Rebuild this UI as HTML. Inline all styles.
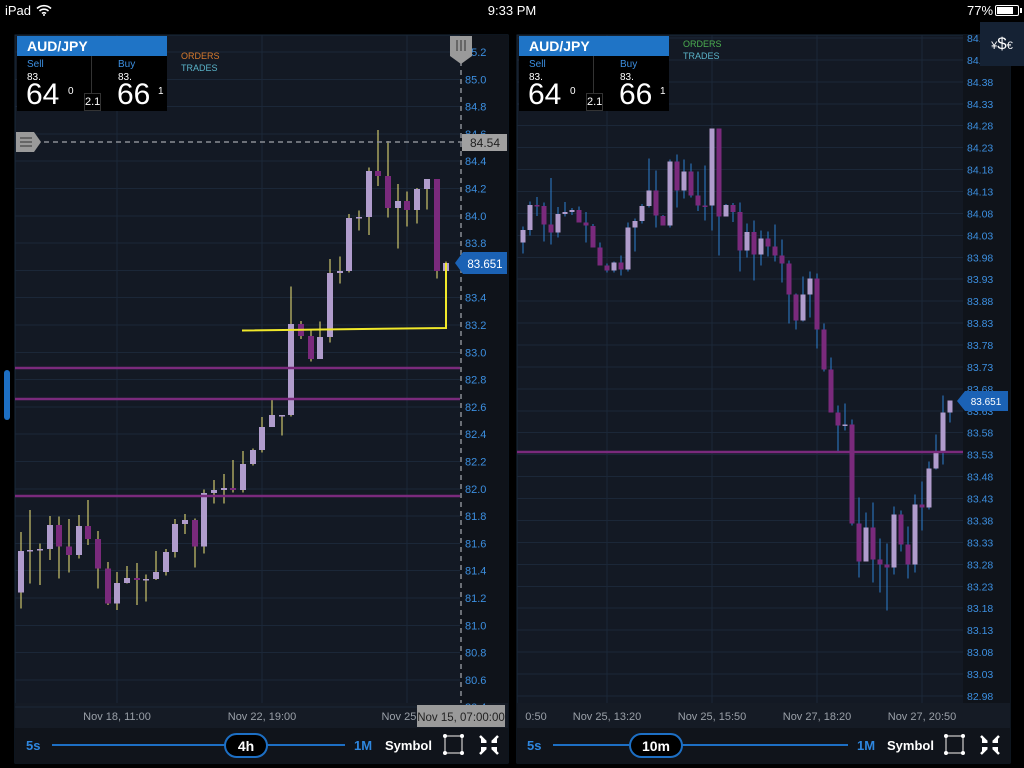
<!DOCTYPE html>
<html><head><meta charset="utf-8"><style>
*{margin:0;padding:0;box-sizing:border-box}
body{width:1024px;height:768px;background:#000;overflow:hidden;font-family:"Liberation Sans",sans-serif;position:relative;color:#fff}
.a{position:absolute}
</style></head><body>
<div class="a" style="left:5px;top:3px;font-size:13px">iPad</div>
<svg class="a" style="left:36px;top:4px" width="16" height="12" viewBox="0 0 16 12"><path d="M1 4.5a10 10 0 0 1 14 0M3.5 7a6.5 6.5 0 0 1 9 0M6 9.5a3 3 0 0 1 4 0" stroke="#fff" stroke-width="1.6" fill="none"/><circle cx="8" cy="11" r="1" fill="#fff"/></svg>
<div class="a" style="left:0;width:1024px;top:3px;text-align:center;font-size:13px">9:33 PM</div>
<div class="a" style="left:967px;top:3px;font-size:13px">77%</div>
<div class="a" style="left:995px;top:5px;width:24px;height:11px;border:1px solid #fff;border-radius:2px"><div style="margin:1px;width:16px;height:7px;background:#fff"></div></div>
<div class="a" style="left:1020px;top:8px;width:2px;height:5px;background:#fff"></div>
<div class="a" style="left:4px;top:370px;width:6px;height:50px;background:#1d6fc4;border-radius:3px"></div>

<svg class="a" style="left:0;top:0" width="1024" height="768" id="s">
<rect x="15" y="35" width="493" height="728" fill="#131924" stroke="#1a2a3d"/>
<rect x="460" y="35" width="48" height="668" fill="#0f131a"/>
<rect x="15" y="703" width="493" height="25" fill="#151b25"/>
<rect x="15" y="728" width="493" height="35" fill="#10141b"/>
<rect x="517" y="35" width="493" height="728" fill="#131924" stroke="#1a2a3d"/>
<rect x="963" y="35" width="47" height="668" fill="#0f131a"/>
<rect x="517" y="703" width="493" height="25" fill="#151b25"/>
<rect x="517" y="728" width="493" height="35" fill="#10141b"/>
<g id="grid" stroke="#1b2738" stroke-width="1" shape-rendering="crispEdges"></g>
<g id="lc" transform="translate(15,120) scale(0.33333)" shape-rendering="crispEdges"></g>
<g id="rc" transform="translate(515,120) scale(0.33333)" shape-rendering="crispEdges"></g>
<g stroke="#7a2a7c" stroke-width="2.5"><line x1="15" y1="368" x2="460" y2="368"/><line x1="15" y1="399" x2="460" y2="399"/><line x1="15" y1="496" x2="460" y2="496"/><line x1="517" y1="452" x2="963" y2="452"/></g>
<polyline points="242,330.5 446,328 446,263" fill="none" stroke="#f0e82a" stroke-width="2"/>
<g id="ax" font-family="Liberation Sans" font-size="11" fill="#3c8fe0"></g>
<line x1="35" y1="142" x2="462" y2="142" stroke="#8a8e94" stroke-width="1.5" stroke-dasharray="5,4"/>
<line x1="461" y1="52" x2="461" y2="703" stroke="#8a8e94" stroke-width="1.5" stroke-dasharray="5,4"/>
<path d="M16 132h18l7 10-7 10h-18z" fill="#9a9a9a"/>
<g stroke="#555" stroke-width="1.5"><line x1="20" y1="138" x2="32" y2="138"/><line x1="20" y1="142" x2="32" y2="142"/><line x1="20" y1="146" x2="32" y2="146"/></g>
<path d="M450 36h22v20l-11 8-11-8z" fill="#9a9a9a"/>
<g stroke="#555" stroke-width="1.5"><line x1="457" y1="40" x2="457" y2="51"/><line x1="461" y1="40" x2="461" y2="51"/><line x1="465" y1="40" x2="465" y2="51"/></g>
<rect x="462" y="134" width="45" height="17" fill="#a0a0a0"/>
<text x="485" y="147" fill="#222" font-size="12" text-anchor="middle" font-family="Liberation Sans">84.54</text>
<path d="M463 252h44v22h-44l-8-11z" fill="#1b62b5"/>
<text x="485" y="268" fill="#fff" font-size="11.5" text-anchor="middle" font-family="Liberation Sans">83.651</text>
<path d="M965 391h43v20h-43l-8-10z" fill="#1b62b5"/>
<text x="986" y="405" fill="#fff" font-size="10" text-anchor="middle" font-family="Liberation Sans">83.651</text>
<g font-family="Liberation Sans" font-size="11" fill="#9aa0a8" text-anchor="middle">
<text x="117" y="720">Nov 18, 11:00</text><text x="262" y="720">Nov 22, 19:00</text><text x="405" y="720">Nov 25, 0</text>
<text x="536" y="720">0:50</text><text x="607" y="720">Nov 25, 13:20</text><text x="712" y="720">Nov 25, 15:50</text><text x="817" y="720">Nov 27, 18:20</text><text x="922" y="720">Nov 27, 20:50</text>
</g>
<rect x="417" y="705" width="88" height="22" fill="#9a9a9a"/>
<text x="461" y="721" fill="#222" font-size="11.5" text-anchor="middle" font-family="Liberation Sans">Nov 15, 07:00:00</text>
<g font-family="Liberation Sans" font-weight="bold" font-size="13">
<text x="26" y="750" fill="#2e86de">5s</text>
<line x1="52" y1="745" x2="345" y2="745" stroke="#1d6fc4" stroke-width="2"/>
<rect x="225" y="734" width="42" height="23" rx="11.5" fill="#000" stroke="#1d6fc4" stroke-width="2"/>
<text x="246" y="751" fill="#fff" text-anchor="middle" font-size="14">4h</text>
<text x="354" y="750" fill="#2e86de">1M</text>
<text x="385" y="750" fill="#fff">Symbol</text>
<text x="527" y="750" fill="#2e86de">5s</text>
<line x1="553" y1="745" x2="848" y2="745" stroke="#1d6fc4" stroke-width="2"/>
<rect x="630" y="734" width="52" height="23" rx="11.5" fill="#000" stroke="#1d6fc4" stroke-width="2"/>
<text x="656" y="751" fill="#fff" text-anchor="middle" font-size="14">10m</text>
<text x="857" y="750" fill="#2e86de">1M</text>
<text x="887" y="750" fill="#fff">Symbol</text>
</g>
<g id="ic"></g>
</svg>

<div class="a" style="left:17px;top:36px;width:150px;height:75px;background:#000">
<div style="height:20px;background:#1f74c6;font-weight:bold;font-size:14px;padding:2px 0 0 10px">AUD/JPY</div>
<div class="a" style="left:74px;top:20px;width:1px;height:55px;background:#333"></div>
<div class="a" style="left:67px;top:57px;width:17px;height:18px;border:1px solid #333;background:#000;font-size:11px;padding:2px 0 0 0">2.1</div>
<div class="a" style="left:10px;top:23px;font-size:10px;color:#3c8fe0">Sell</div>
<div class="a" style="left:10px;top:36px;font-size:10px">83.</div>
<div class="a" style="left:9px;top:42px;font-size:30px">64</div><div class="a" style="left:51px;top:50px;font-size:10px">0</div>
<div class="a" style="left:101px;top:23px;font-size:10px;color:#3c8fe0">Buy</div>
<div class="a" style="left:101px;top:36px;font-size:10px">83.</div>
<div class="a" style="left:100px;top:42px;font-size:30px">66</div><div class="a" style="left:141px;top:50px;font-size:10px">1</div>
</div>
<div class="a" style="left:181px;top:51px;font-size:9px;color:#d97a2c">ORDERS</div>
<div class="a" style="left:181px;top:63px;font-size:9px;color:#5ab3c8">TRADES</div>
<div class="a" style="left:519px;top:36px;width:150px;height:75px;background:#000">
<div style="height:20px;background:#1f74c6;font-weight:bold;font-size:14px;padding:2px 0 0 10px">AUD/JPY</div>
<div class="a" style="left:74px;top:20px;width:1px;height:55px;background:#333"></div>
<div class="a" style="left:67px;top:57px;width:17px;height:18px;border:1px solid #333;background:#000;font-size:11px;padding:2px 0 0 0">2.1</div>
<div class="a" style="left:10px;top:23px;font-size:10px;color:#3c8fe0">Sell</div>
<div class="a" style="left:10px;top:36px;font-size:10px">83.</div>
<div class="a" style="left:9px;top:42px;font-size:30px">64</div><div class="a" style="left:51px;top:50px;font-size:10px">0</div>
<div class="a" style="left:101px;top:23px;font-size:10px;color:#3c8fe0">Buy</div>
<div class="a" style="left:101px;top:36px;font-size:10px">83.</div>
<div class="a" style="left:100px;top:42px;font-size:30px">66</div><div class="a" style="left:141px;top:50px;font-size:10px">1</div>
</div>
<div class="a" style="left:683px;top:39px;font-size:9px;color:#4caf50">ORDERS</div>
<div class="a" style="left:683px;top:51px;font-size:9px;color:#5ab3c8">TRADES</div>
<div class="a" style="left:980px;top:22px;width:44px;height:44px;background:#152234;font-size:11px;text-align:center;padding-top:12px">¥<span style="font-size:17px">$</span>€</div>

<script>
var NS="http://www.w3.org/2000/svg";
function el(p,t,a){var e=document.createElementNS(NS,t);for(var k in a)e.setAttribute(k,a[k]);p.appendChild(e);return e}
var L=[[18,1293,1418,1236,1466,1],[45,1290,1293,1170,1390,1],[75,1287,1290,1270,1395,1],[105,1215,1287,1188,1320,1],[132,1215,1280,1190,1376,0],[162,1280,1305,1197,1358,0],[192,1218,1305,1185,1316,1],[219,1218,1257,1140,1275,0],[249,1257,1346,1233,1406,0],[279,1346,1451,1326,1455,0],[306,1389,1451,1356,1470,1],[336,1374,1389,1338,1391,1],[366,1374,1380,1329,1455,0],[393,1377,1380,1364,1445,1],[423,1356,1377,1293,1380,1],[453,1296,1356,1287,1367,1],[480,1212,1296,1197,1313,1],[510,1200,1212,1182,1242,1],[540,1200,1280,1196,1343,0],[567,1119,1280,1109,1301,1],[597,1110,1119,1080,1151,1],[627,1104,1110,1062,1151,1],[654,1104,1110,1020,1118,0],[684,1032,1110,993,1118,1],[714,990,1032,986,1037,1],[741,921,990,891,998,1],[771,885,921,840,921,1],[801,885,888,885,947,1],[828,612,885,500,890,1],[858,612,648,603,657,0],[888,648,717,630,724,0],[915,651,717,605,717,1],[945,459,651,417,668,1],[975,453,459,410,491,1],[1002,294,453,282,458,1],[1032,291,294,272,332,1],[1062,153,291,142,345,1],[1089,153,168,30,198,0],[1119,168,264,63,293,0],[1149,243,264,192,386,1],[1176,243,270,215,320,0],[1206,207,270,204,311,1],[1236,177,207,177,269,1],[1266,177,453,177,476,0],[1293,429,453,425,623,1]];
var R=[[24,330,368,320,400,1],[45,255,330,245,347,1],[66,255,258,231,288,0],[87,258,314,248,365,0],[108,314,338,174,373,0],[129,282,338,261,352,1],[150,276,282,246,290,1],[171,270,276,264,285,1],[192,270,308,260,308,0],[213,308,317,276,368,0],[234,318,383,312,383,0],[255,383,437,368,437,0],[276,437,452,431,457,0],[297,428,452,425,458,1],[318,428,449,406,467,0],[339,323,449,308,455,1],[360,303,323,296,395,1],[381,258,303,252,311,1],[402,212,258,116,263,1],[423,212,287,152,323,0],[444,288,317,285,317,0],[465,125,317,119,323,1],[486,125,212,104,263,0],[507,155,212,119,236,1],[528,155,227,131,233,0],[549,227,257,155,273,0],[570,257,261,137,302,0],[591,26,257,26,332,1],[612,26,290,26,407,0],[633,255,290,252,290,1],[654,255,276,249,306,0],[675,276,392,248,455,0],[696,336,392,311,413,1],[717,336,404,302,482,0],[738,356,404,332,437,1],[759,356,380,335,410,0],[780,380,407,314,425,0],[801,407,431,359,488,0],[822,431,524,422,610,0],[843,524,602,521,629,0],[864,524,602,470,605,1],[885,476,524,455,593,1],[906,476,629,461,686,0],[927,629,749,611,754,0],[948,749,878,713,878,0],[969,878,917,857,998,0],[990,914,917,851,932,1],[1011,914,1211,899,1217,0],[1032,1211,1325,1133,1373,0],[1053,1223,1325,1178,1325,1],[1074,1223,1319,1148,1388,0],[1095,1319,1334,1256,1418,0],[1116,1334,1343,1271,1472,0],[1137,1184,1343,1160,1364,1],[1158,1184,1274,1172,1295,0],[1179,1274,1334,1220,1376,0],[1200,1154,1334,1124,1358,1],[1221,1154,1163,1085,1232,0],[1242,1046,1163,1024,1169,1],[1263,997,1046,944,1049,1],[1284,878,997,827,1034,1],[1305,842,878,842,907,1]];
function draw(g,d,wc,bw){d.forEach(function(c){el(g,'rect',{x:c[0]-1.5,y:c[3],width:3,height:c[4]-c[3],fill:wc});el(g,'rect',{x:c[0]-bw/2,y:c[1],width:bw,height:Math.max(4,c[2]-c[1]),fill:c[5]?'#b09ccc':'#7a2a7c'})})}
draw(document.getElementById('lc'),L,'#f0e87a',18);
draw(document.getElementById('rc'),R,'#2d7fd0',15);
var gr=document.getElementById('grid'),ax=document.getElementById('ax');
for(var i=0;i<25;i++){var y=52+i*27.3;el(gr,'line',{x1:15,x2:460,y1:y,y2:y});if(i!=8){var t=el(ax,'text',{x:465,y:y+4});t.textContent=(85.2-i*0.2).toFixed(1)}}
[117,262,407].forEach(function(x){el(gr,'line',{x1:x,x2:x,y1:35,y2:703})});
for(var i=0;i<31;i++){var y=38+i*21.93;el(gr,'line',{x1:517,x2:963,y1:y,y2:y});var t=el(ax,'text',{x:967,y:y+4,'font-size':10.5});t.textContent=(84.48-i*0.05).toFixed(2)}
[607,712,817,922].forEach(function(x){el(gr,'line',{x1:x,x2:x,y1:35,y2:703})});
var ic=document.getElementById('ic');
[[445,480],[946,981]].forEach(function(p){var x=p[0];el(ic,'rect',{x:x,y:736,width:17,height:17,fill:'none',stroke:'#aaa','stroke-width':1.5});[[x,736],[x+17,736],[x,753],[x+17,753]].forEach(function(q){el(ic,'circle',{cx:q[0],cy:q[1],r:2,fill:'#fff'})});
var X=p[1];el(ic,'path',{d:'M'+X+' 736l6 6M'+(X+18)+' 736l-6 6M'+X+' 754l6-6M'+(X+18)+' 754l-6-6',stroke:'#fff','stroke-width':2.5,fill:'none'});
el(ic,'path',{d:'M'+(X+7)+' 743l-6 0 0-6zM'+(X+11)+' 743l6 0 0-6zM'+(X+7)+' 747l-6 0 0 6zM'+(X+11)+' 747l6 0 0 6z',fill:'#fff'})});
</script>
</body></html>
